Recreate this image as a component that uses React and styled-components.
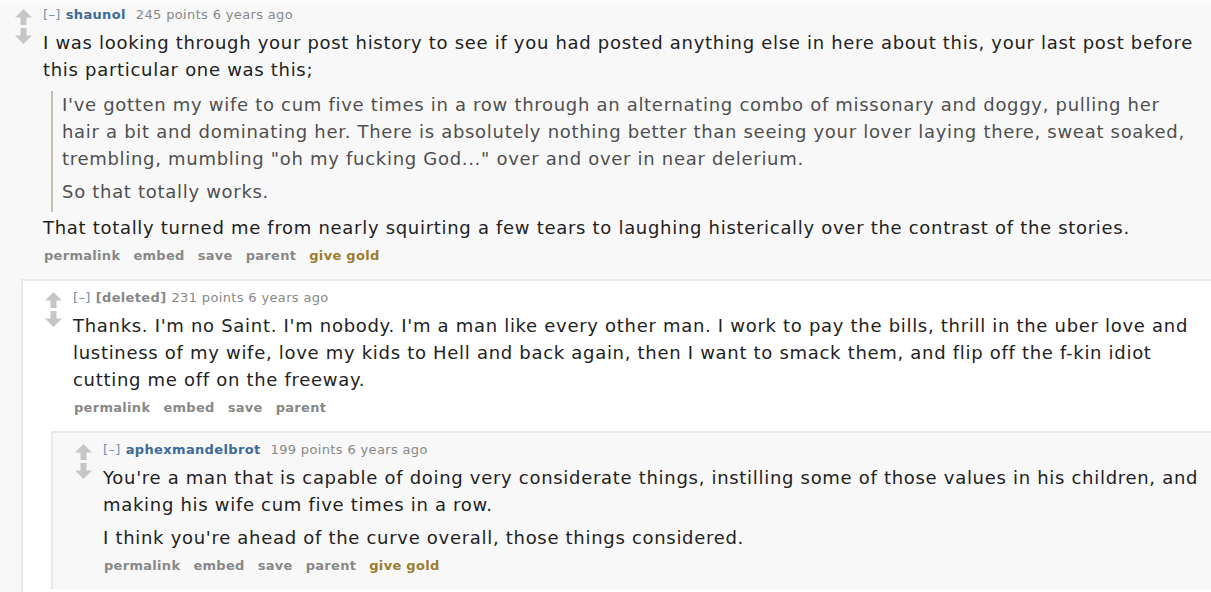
import styled, { createGlobalStyle } from "styled-components";

const GlobalStyle = createGlobalStyle`
  html, body {
    margin: 0;
    padding: 0;
    background: #fafafa;
    overflow: hidden;
  }
  body {
    font-family: "DejaVu Sans", Verdana, sans-serif;
  }
`;

const Page = styled.div`
  width: 1211px;
  min-height: 592px;
  background: #fafafa;
  padding-top: 6px;
  box-sizing: border-box;
`;

const Box = styled.div`
  background: ${(p) => (p.$depth % 2 === 1 ? "#ffffff" : "#f8f8f8")};
  padding: ${(p) => (p.$depth === 0 ? "0 0 0 15px" : "8px 0 14px 22px")};
  border-top: ${(p) => (p.$depth === 0 ? "none" : "2px solid #e9e9e9")};
  border-left: ${(p) => (p.$depth === 0 ? "none" : "2px solid #e9e9e9")};
  margin-left: ${(p) => (p.$depth === 0 ? "0" : "6px")};
`;

const Row = styled.div`
  display: flex;
  align-items: flex-start;
`;

const Arrows = styled.div`
  width: 17px;
  flex-shrink: 0;
  margin-right: 11px;
  padding-top: 3px;
  display: flex;
  flex-direction: column;
  gap: 3px;
`;

const Entry = styled.div`
  flex: 1;
  min-width: 0;
  padding-right: 8px;
`;

const Tagline = styled.div`
  font-size: 13px;
  letter-spacing: 0.35px;
  line-height: 18px;
  color: #888;
  white-space: nowrap;
`;

const Expand = styled.span`
  color: #6f8fae;
  margin-right: 5px;
`;

const Author = styled.span`
  font-weight: bold;
  color: ${(p) => (p.$deleted ? "#888" : "#3d6a97")};
  margin-right: ${(p) => (p.$deleted ? "5px" : "10px")};
`;

const Body = styled.div`
  margin-top: 5px;
  font-size: 18px;
  letter-spacing: 0.7px;
  line-height: 27px;
  color: #222;
`;

const Para = styled.p`
  margin: 0 0 6px;
`;

const Quote = styled.blockquote`
  margin: 8px 0 2px 8px;
  padding: 0 0 1px 9px;
  border-left: 2px solid #c5c1ad;
  color: #4f4f4f;
`;

const Buttons = styled.ul`
  list-style: none;
  margin: 3px 0 0;
  padding: 0 0 0 1px;
  display: flex;
  gap: 13px;
  font-size: 13px;
  letter-spacing: 0.3px;
  line-height: 18px;
  font-weight: bold;
  color: #888;
`;

const Button = styled.li`
  color: ${(p) => (p.$gold ? "#9a7d2e" : "#888")};
`;

const Children = styled.div`
  margin-top: 14px;
`;

function Arrow({ down }) {
  return (
    <svg width="17" height="16" viewBox="0 0 17 16" style={{ display: "block" }}>
      <path
        d="M8.5 0 L17 8.5 L11.5 8.5 L11.5 16 L5.5 16 L5.5 8.5 L0 8.5 Z"
        fill="#c6c6c6"
        transform={down ? "rotate(180 8.5 8)" : undefined}
      />
    </svg>
  );
}

function Comment({ depth, author, deleted, points, paragraphs, gold, children }) {
  return (
    <Box $depth={depth}>
      <Row>
        <Arrows>
          <Arrow />
          <Arrow down />
        </Arrows>
        <Entry>
          <Tagline>
            <Expand>[–]</Expand>
            <Author $deleted={deleted}>{author}</Author>
            {points} points 6 years ago
          </Tagline>
          <Body>{paragraphs}</Body>
          <Buttons>
            <Button>permalink</Button>
            <Button>embed</Button>
            <Button>save</Button>
            <Button>parent</Button>
            {gold && <Button $gold>give gold</Button>}
          </Buttons>
        </Entry>
      </Row>
      {children && <Children>{children}</Children>}
    </Box>
  );
}

export default function App() {
  return (
    <Page>
      <GlobalStyle />
      <Comment
        depth={0}
        author="shaunol"
        points={245}
        gold
        paragraphs={
          <>
            <Para>
              I was looking through your post history to see if you had posted anything else in here
              about this, your last post before this particular one was this;
            </Para>
            <Quote>
              <Para>
                I've gotten my wife to cum five times in a row through an alternating combo of
                missonary and doggy, pulling her hair a bit and dominating her. There is absolutely
                nothing better than seeing your lover laying there, sweat soaked, trembling, mumbling
                "oh my fucking God..." over and over in near delerium.
              </Para>
              <Para>So that totally works.</Para>
            </Quote>
            <Para>
              That totally turned me from nearly squirting a few tears to laughing histerically over
              the contrast of the stories.
            </Para>
          </>
        }
      >
        <Comment
          depth={1}
          author="[deleted]"
          deleted
          points={231}
          paragraphs={
            <Para>
              Thanks. I'm no Saint. I'm nobody. I'm a man like every other man. I work to pay the
              bills, thrill in the uber love and lustiness of my wife, love my kids to Hell and back
              again, then I want to smack them, and flip off the f-kin idiot cutting me off on the
              freeway.
            </Para>
          }
        >
          <Comment
            depth={2}
            author="aphexmandelbrot"
            points={199}
            gold
            paragraphs={
              <>
                <Para>
                  You're a man that is capable of doing very considerate things, instilling some of
                  those values in his children, and making his wife cum five times in a row.
                </Para>
                <Para>I think you're ahead of the curve overall, those things considered.</Para>
              </>
            }
          />
        </Comment>
      </Comment>
    </Page>
  );
}
